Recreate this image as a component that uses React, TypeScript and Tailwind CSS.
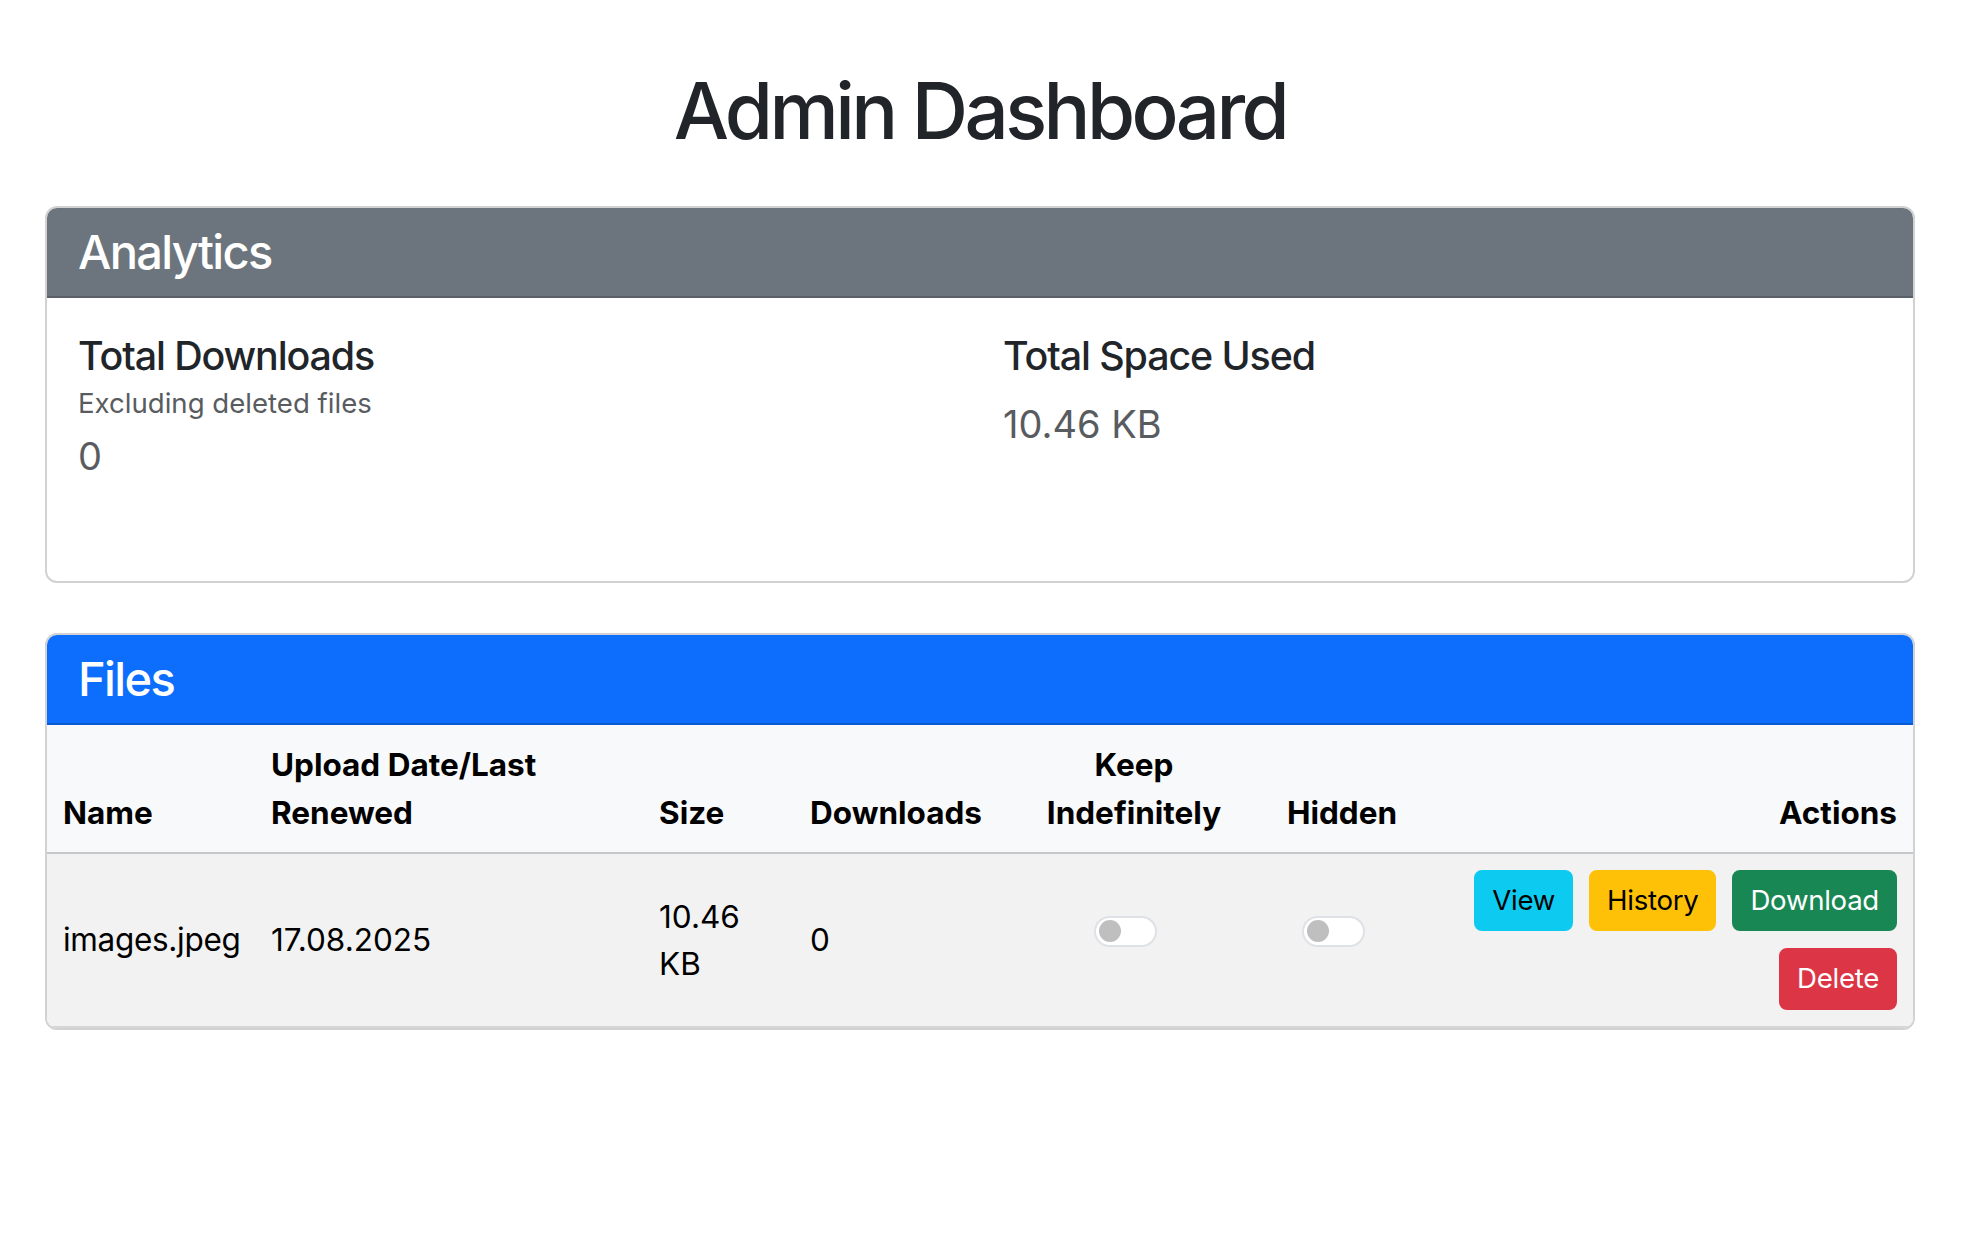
import React from 'react';

type FileRow = { name: string; date: string; size: string; downloads: number };

const files: FileRow[] = [{ name: 'images.jpeg', date: '17.08.2025', size: '10.46 KB', downloads: 0 }];

const Toggle: React.FC = () => (
  <div className="flex justify-center">
    <span className="mr-[17px] mb-[17px] flex h-[31px] w-[63px] items-center rounded-full border-2 border-[#dee2e6] bg-white px-[3px]">
      <span className="h-[22px] w-[22px] rounded-full bg-[#bfbfbf]" />
    </span>
  </div>
);

const Btn: React.FC<{ label: string; cls: string }> = ({ label, cls }) => (
  <button className={`whitespace-nowrap rounded-[8px] border-2 px-[16px] py-[8px] text-[27.6px] leading-[41.4px] tracking-[-0.01em] ${cls}`}>{label}</button>
);

export default function App() {
  return (
    <div className="min-h-screen bg-white font-[Inter,'Liberation_Sans',sans-serif] text-[#212529]">
      <div className="pl-[45px] pr-[61px] pt-[64px]">
        <h1 className="mb-[48px] text-center text-[78px] font-medium leading-[1.2] tracking-[-0.046em]">Admin Dashboard</h1>

        {/* analytics */}
        <section className="overflow-hidden rounded-[12px] border-2 border-[#d2d2d2]">
          <div className="border-b-2 border-black/[0.175] bg-[#6c757d] px-[31px] py-[16px]">
            <h4 className="text-[47px] font-medium leading-[1.2] tracking-[-0.035em] text-white">Analytics</h4>
          </div>
          <div className="grid h-[283px] grid-cols-2 gap-x-[46px] px-[31px] pt-[35px]">
            <div>
              <h5 className="mb-[7px] text-[39.4px] font-medium leading-[1.2] tracking-[-0.028em]">Total Downloads</h5>
              <h6 className="mb-[14px] text-[27.6px] leading-[1.2] text-[#595c5f]">Excluding deleted files</h6>
              <p className="text-[38px] leading-[1.2] text-[#595c5f]">0</p>
            </div>
            <div>
              <h5 className="mb-[22px] text-[39.4px] font-medium leading-[1.2] tracking-[-0.028em]">Total Space Used</h5>
              <p className="text-[38px] leading-[1.2] text-[#595c5f]">10.46 KB</p>
            </div>
          </div>
        </section>

        {/* files */}
        <section className="mt-[50px] overflow-hidden rounded-[12px] border-2 border-[#d2d2d2]">
          <div className="border-b-2 border-black/[0.175] bg-[#0d6efd] px-[31px] py-[16px]">
            <h4 className="text-[47px] font-medium leading-[1.2] tracking-[-0.035em] text-white">Files</h4>
          </div>
          <table className="w-full table-fixed border-collapse text-[31.5px] leading-[47.25px] text-black">
            <colgroup>
              <col className="w-[208px]" />
              <col className="w-[388px]" />
              <col className="w-[151px]" />
              <col className="w-[236px]" />
              <col className="w-[208px]" />
              <col className="w-[208px]" />
              <col />
            </colgroup>
            <thead>
              <tr className="bg-[#f8f9fa]">
                <th className="border-b-2 border-[#c6c7c8] p-[16px] text-left align-bottom font-bold">Name</th>
                <th className="border-b-2 border-[#c6c7c8] p-[16px] text-left align-bottom font-bold">Upload Date/Last Renewed</th>
                <th className="border-b-2 border-[#c6c7c8] p-[16px] text-left align-bottom font-bold">Size</th>
                <th className="border-b-2 border-[#c6c7c8] p-[16px] text-left align-bottom font-bold">Downloads</th>
                <th className="border-b-2 border-[#c6c7c8] p-[16px] text-center align-bottom font-bold">Keep Indefinitely</th>
                <th className="border-b-2 border-[#c6c7c8] p-[16px] text-center align-bottom font-bold">Hidden</th>
                <th className="border-b-2 border-[#c6c7c8] p-[16px] text-right align-bottom font-bold">Actions</th>
              </tr>
            </thead>
            <tbody>
              {files.map((f) => (
                <tr key={f.name} className="bg-[#f2f2f2]">
                  <td className="border-b-2 border-[#d6d6d6] p-[16px] align-middle tracking-[-0.01em]">{f.name}</td>
                  <td className="border-b-2 border-[#d6d6d6] p-[16px] align-middle">{f.date}</td>
                  <td className="border-b-2 border-[#d6d6d6] p-[16px] align-middle">{f.size}</td>
                  <td className="border-b-2 border-[#d6d6d6] p-[16px] align-middle">{f.downloads}</td>
                  <td className="border-b-2 border-[#d6d6d6] p-[16px] align-middle"><Toggle /></td>
                  <td className="border-b-2 border-[#d6d6d6] p-[16px] align-middle"><Toggle /></td>
                  <td className="border-b-2 border-[#d6d6d6] p-[16px] align-middle">
                    <div className="flex flex-col items-end gap-[17px]">
                      <div className="flex gap-[16px]">
                        <Btn label="View" cls="border-[#0dcaf0] bg-[#0dcaf0] text-black" />
                        <Btn label="History" cls="border-[#ffc107] bg-[#ffc107] text-black" />
                        <Btn label="Download" cls="border-[#198754] bg-[#198754] text-white" />
                      </div>
                      <Btn label="Delete" cls="border-[#dc3545] bg-[#dc3545] text-white" />
                    </div>
                  </td>
                </tr>
              ))}
            </tbody>
          </table>
        </section>
      </div>
    </div>
  );
}
